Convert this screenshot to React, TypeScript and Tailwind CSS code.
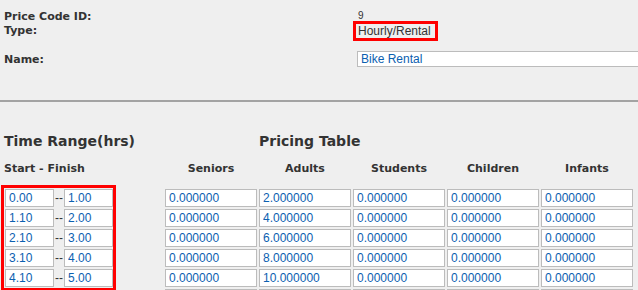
const rangeRows = [
  ['0.00', '1.00'],
  ['1.10', '2.00'],
  ['2.10', '3.00'],
  ['3.10', '4.00'],
  ['4.10', '5.00'],
]

const priceRows = [
  ['0.000000', '2.000000', '0.000000', '0.000000', '0.000000'],
  ['0.000000', '4.000000', '0.000000', '0.000000', '0.000000'],
  ['0.000000', '6.000000', '0.000000', '0.000000', '0.000000'],
  ['0.000000', '8.000000', '0.000000', '0.000000', '0.000000'],
  ['0.000000', '10.000000', '0.000000', '0.000000', '0.000000'],
  ['0.000000', '12.000000', '0.000000', '0.000000', '0.000000'],
]

const columns = ['Seniors', 'Adults', 'Students', 'Children', 'Infants']

const labelFont = "font-['DejaVu_Sans',Verdana,sans-serif]"
const fieldFont = "font-['Liberation_Sans',Arial,sans-serif]"

function Field({ value, width }: { value: string; width: string }): React.JSX.Element {
  return (
    <input
      readOnly
      value={value}
      className={`${width} h-[18px] border border-[#bcbcbc] bg-white px-[3px] text-[12px] leading-[16px] text-[#0b60b0] outline-none ${fieldFont}`}
    />
  )
}

export default function App(): React.JSX.Element {
  return (
    <div className="h-[290px] w-[638px] overflow-hidden bg-[#efefef] text-[#333333]">
      {/* header fields */}
      <div className="flex">
        <div className={`w-[353px] shrink-0 pl-[4px] pt-[10px] text-[11px] font-bold leading-[14px] ${labelFont}`}>
          <div>Price Code ID:</div>
          <div>Type:</div>
          <div className="mt-[14px] pt-[1px]">Name:</div>
        </div>
        <div className={`flex-1 ${fieldFont} text-[12px] text-[#333333]`}>
          <div className="mt-[11px] h-[10px] pl-[5px] text-[10px] leading-[10px]">9</div>
          <div className="inline-block border-[3px] border-[#ff0000] pl-[2px] pr-[4px] leading-[14px]">
            Hourly/Rental
          </div>
          <div className="mt-[9px] pl-[4px]">
            <input
              readOnly
              value="Bike Rental"
              className={`h-[16px] w-[300px] border border-[#bcbcbc] bg-white px-[3px] text-[12px] leading-[14px] text-[#0b60b0] outline-none ${fieldFont}`}
            />
          </div>
        </div>
      </div>

      <div className="mt-[32px] h-[2px] bg-[#a3a3a3]" />

      {/* pricing */}
      <div className={`mt-[30px] flex ${labelFont}`}>
        <div className="w-[165px] shrink-0 pl-[1px]">
          <h2 className="pl-[3px] text-[14px] font-bold leading-[18px]">Time Range(hrs)</h2>
          <div className="mt-[12px] pl-[3px] text-[11px] font-bold leading-[14px]">Start - Finish</div>
          <div className="mt-[9px] inline-flex flex-col gap-[2px] border-[3px] border-[#ff0000] p-[1px] pr-0">
            {rangeRows.map(([start, finish]) => (
              <div key={start} className="flex items-center">
                <Field value={start} width="w-[49px]" />
                <span className={`w-[10px] text-center text-[12px] ${fieldFont}`}>--</span>
                <Field value={finish} width="w-[49px]" />
              </div>
            ))}
          </div>
        </div>

        <div className="flex-1">
          <h2 className="ml-[94px] text-[14px] font-bold leading-[18px]">Pricing Table</h2>
          <div className="mt-[12px] grid grid-cols-[repeat(5,92px)] gap-x-[2px] text-[11px] font-bold leading-[14px]">
            {columns.map((c) => (
              <div key={c} className="text-center">
                {c}
              </div>
            ))}
          </div>
          <div className="mt-[13px] flex flex-col gap-[2px]">
            {priceRows.map((row, i) => (
              <div key={i} className="flex gap-[2px]">
                {row.map((v, j) => (
                  <Field key={j} value={v} width="w-[92px]" />
                ))}
              </div>
            ))}
          </div>
        </div>
      </div>
    </div>
  )
}
